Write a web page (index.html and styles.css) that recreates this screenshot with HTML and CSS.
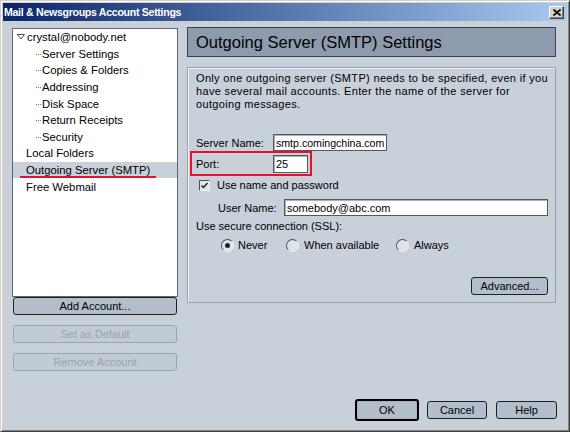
FILE: index.html
```html
<!DOCTYPE html>
<html>
<head>
<meta charset="utf-8">
<link rel="stylesheet" href="styles.css">
</head>
<body>
<div class="window">
  <div class="titlebar">
    <span class="title">Mail &amp; Newsgroups Account Settings</span>
    <span class="close"><svg width="8" height="7" viewBox="0 0 8 7"><path d="M0.5 0.5 L7.5 6.5 M7.5 0.5 L0.5 6.5" stroke="#000" stroke-width="1.6" fill="none"/></svg></span>
  </div>
  <div class="client">
    <div class="main">
      <div class="left">
        <div class="tree">
          <div class="row root"><svg class="twisty" width="8" height="6" viewBox="0 0 8 6"><path d="M0.5 0.5 H7.5 L4 5 Z" fill="#fff" stroke="#4a4f58" stroke-width="1"/></svg><span>crystal@nobody.net</span></div>
          <div class="row child"><span class="dots"></span><span>Server Settings</span></div>
          <div class="row child"><span class="dots"></span><span>Copies &amp; Folders</span></div>
          <div class="row child"><span class="dots"></span><span>Addressing</span></div>
          <div class="row child"><span class="dots"></span><span>Disk Space</span></div>
          <div class="row child"><span class="dots"></span><span>Return Receipts</span></div>
          <div class="row child"><span class="dots"></span><span>Security</span></div>
          <div class="row top">Local Folders</div>
          <div class="row top selected">Outgoing Server (SMTP)<span class="underline"></span></div>
          <div class="row top">Free Webmail</div>
        </div>
        <div class="btn side">Add Account...</div>
        <div class="btn side disabled">Set as Default</div>
        <div class="btn side disabled">Remove Account</div>
      </div>
      <div class="right">
        <div class="header">Outgoing Server (SMTP) Settings</div>
        <div class="group">
          <div class="desc">Only one outgoing server (SMTP) needs to be specified, even if you<br>have several mail accounts. Enter the name of the server for<br>outgoing messages.</div>
          <div class="frow server"><span class="label">Server Name:</span><span class="field w-server">smtp.comingchina.com</span></div>
          <div class="frow port"><span class="label">Port:</span><span class="field w-port">25</span><span class="redbox"></span></div>
          <div class="frow check"><span class="checkbox"><svg width="7" height="7" viewBox="0 0 7 7"><path d="M0.5 3.5 L2.5 5.5 L6.5 1" stroke="#1a1e24" stroke-width="1.4" fill="none"/></svg></span><span>Use name and password</span></div>
          <div class="frow user"><span class="label ulabel">User Name:</span><span class="field w-user">somebody@abc.com</span></div>
          <div class="frow ssl">Use secure connection (SSL):</div>
          <div class="frow radios">
            <span class="ritem r1"><span class="radio on"></span>Never</span>
            <span class="ritem r2"><span class="radio"></span>When available</span>
            <span class="ritem r3"><span class="radio"></span>Always</span>
          </div>
          <div class="advrow"><span class="btn adv">Advanced...</span></div>
        </div>
      </div>
    </div>
    <div class="footer">
      <span class="btn ok">OK</span>
      <span class="btn cancel">Cancel</span>
      <span class="btn help">Help</span>
    </div>
  </div>
</div>
</body>
</html>
```
FILE: styles.css
```css
* { box-sizing: border-box; }
html, body { margin: 0; padding: 0; }
body {
  width: 570px; height: 432px; overflow: hidden;
  font-family: "Liberation Sans", Arial, sans-serif;
  font-size: 11px; color: #000; background: #d4d0c8;
}
.window {
  width: 570px; height: 432px;
  border: 1px solid; border-color: #d4d0c8 #404040 #404040 #d4d0c8;
  box-shadow: inset 1px 1px #fff, inset -1px -1px #808080;
  padding: 2px; background: #d4d0c8;
  display: flex; flex-direction: column;
}
.titlebar {
  height: 18px; flex: none;
  background: linear-gradient(to right, #0a246a, #a6caf0);
  display: flex; align-items: center; justify-content: space-between;
  padding: 0 3px 0 1px;
}
.title { color: #fff; font-weight: bold; font-size: 10.6px; letter-spacing: -0.3px; }
.close {
  width: 15px; height: 13px; background: #d4d0c8;
  border: 1px solid; border-color: #fff #404040 #404040 #fff;
  box-shadow: inset -1px -1px #808080;
  display: flex; align-items: center; justify-content: center;
}
.client {
  flex: 1; background: #c8d0d9;
  display: flex; flex-direction: column;
  padding: 6px 11px 8px 9px;
}
.main { display: flex; gap: 9px; }
.left { width: 166px; display: flex; flex-direction: column; padding-top: 1px; }
.tree { height: 269px; border: 1px solid #5d6774; background: #fff; }
.row {
  height: 16.6px; display: flex; align-items: center;
  white-space: nowrap; position: relative; font-size: 11.3px;
}
.root { padding-left: 4px; }
.twisty { margin-right: 2px; }
.child { padding-left: 23px; }
.dots { width: 5px; height: 0; border-top: 1px dotted #7a7a7a; margin-right: 1px; margin-top: 1px; }
.top { padding-left: 13px; }
.selected { background: #c8d0d9; }
.underline {
  position: absolute; left: 7px; width: 136px; top: 14px; height: 2px;
  background: #e5112d;
}
.btn {
  display: flex; align-items: center; justify-content: center;
  border: 1px solid #1c2026; border-radius: 3px;
  background: #b3becb; white-space: nowrap;
}
.side { height: 18px; margin: 0 1px; }
.side:nth-of-type(1) { margin-top: 5px; }
.side + .side { margin-top: 10px; }
.disabled { border-color: #9aa4b0; color: #99a2ad; background: #c2cbd5; }
.right { width: 369px; }
.header {
  height: 30px; border: 1px solid #39424e; background: #8d9bad;
  font-size: 16.5px; padding-left: 8px;
  display: flex; align-items: center;
}
.group {
  margin-top: 10px; height: 236px;
  border: 1px solid #9aa3ad; box-shadow: inset 1px 1px #eef1f4;
  padding: 4px 7px 0 8px;
}
.desc { line-height: 13px; white-space: nowrap; letter-spacing: 0.33px; }
.frow { display: flex; align-items: center; white-space: nowrap; position: relative; }
.label { width: 77px; }
.field {
  height: 17px; border: 1px solid #4f5966; background: #fff;
  box-shadow: inset 1px 1px #a9b1bb;
  padding-left: 2px; display: flex; align-items: center;
  font-size: 10.6px; overflow: hidden;
}
.server { margin-top: 23px; height: 17px; }
.w-server { width: 114px; }
.port { margin-top: 4px; height: 18px; }
.w-port { width: 35px; height: 18px; font-size: 11px; }
.redbox {
  position: absolute; left: -6px; top: -4px; width: 122px; height: 25px;
  border: 2px solid #e5112d;
}
.check { margin-top: 5px; height: 14px; padding-left: 3px; }
.checkbox {
  width: 11px; height: 11px; margin-right: 7px;
  border: 1px solid; border-color: #4a525c #f0f3f6 #f0f3f6 #4a525c;
  background: #dfe4ea;
  display: flex; align-items: center; justify-content: center;
}
.user { margin-top: 7px; height: 17px; padding-left: 22px; }
.ulabel { width: 66px; }
.w-user { width: 264px; font-size: 11px; }
.ssl { margin-top: 3px; height: 14px; }
.radios { margin-top: 5px; height: 14px; padding-left: 25px; }
.ritem { display: flex; align-items: center; }
.r1 { width: 65px; }
.r2 { width: 110px; }
.radio {
  width: 13px; height: 13px; border-radius: 50%;
  border: 1px solid; border-color: #4a525c #e9edf1 #e9edf1 #4a525c;
  background: #dfe4ea; margin-right: 5px; position: relative;
}
.r1 .radio { margin-right: 4px; }
.radio.on::after {
  content: ""; position: absolute; left: 3px; top: 3px;
  width: 5px; height: 5px; border-radius: 50%; background: #1d2228;
}
.advrow { display: flex; justify-content: flex-end; margin-top: 25px; }
.adv { width: 77px; height: 18px; }
.footer {
  margin-top: auto; margin-right: -1px;
  display: flex; justify-content: flex-end; align-items: center; height: 22px;
}
.ok {
  width: 64px; height: 22px; border: 2px solid #000;
  box-shadow: 0 0 0 1px #a9b3bf inset;
  margin-right: 8px;
}
.cancel { width: 60px; height: 18px; margin-right: 9px; }
.help { width: 61px; height: 18px; }
```
